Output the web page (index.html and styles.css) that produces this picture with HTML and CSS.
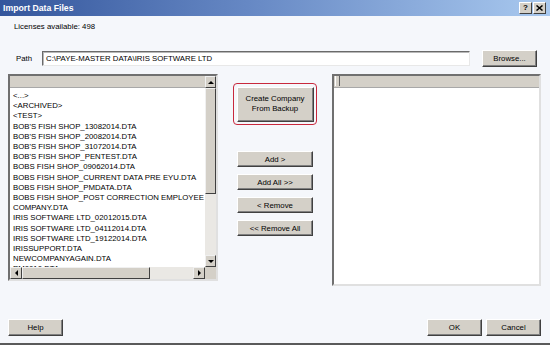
FILE: index.html
```html
<!DOCTYPE html>
<html lang="en">
<head>
    <meta charset="UTF-8">
    <title>Import Data Files</title>
    <link rel="stylesheet" href="styles.css">
</head>
<body>
    <div class="window">
        <div class="titlebar">
            <span class="title">Import Data Files</span>
            <div class="caption-btns">
                <span class="cap-btn">?</span>
                <span class="cap-btn">
                    <svg width="7" height="6" viewBox="0 0 7 6"><path d="M0.5 0.5 L6.5 5.5 M6.5 0.5 L0.5 5.5" stroke="#000" stroke-width="1.5"/></svg>
                </span>
            </div>
        </div>

        <div class="content">
            <div class="licenses">Licenses available: 498</div>

            <div class="path-row">
                <span class="path-label">Path</span>
                <div class="path-input">C:\PAYE-MASTER DATA\IRIS SOFTWARE LTD</div>
                <button class="btn browse">Browse...</button>
            </div>

            <div class="lists">
                <div class="listbox source">
                    <div class="lb-body">
                        <div class="lb-header"></div>
                        <ul class="items">
                            <li>&lt;...&gt;</li>
                            <li>&lt;ARCHIVED&gt;</li>
                            <li>&lt;TEST&gt;</li>
                            <li>BOB'S FISH SHOP_13082014.DTA</li>
                            <li>BOB'S FISH SHOP_20082014.DTA</li>
                            <li>BOB'S FISH SHOP_31072014.DTA</li>
                            <li>BOB'S FISH SHOP_PENTEST.DTA</li>
                            <li>BOBS FISH SHOP_09062014.DTA</li>
                            <li>BOBS FISH SHOP_CURRENT DATA PRE EYU.DTA</li>
                            <li>BOBS FISH SHOP_PMDATA.DTA</li>
                            <li>BOBS FISH SHOP_POST CORRECTION EMPLOYEE</li>
                            <li>COMPANY.DTA</li>
                            <li>IRIS SOFTWARE LTD_02012015.DTA</li>
                            <li>IRIS SOFTWARE LTD_04112014.DTA</li>
                            <li>IRIS SOFTWARE LTD_19122014.DTA</li>
                            <li>IRISSUPPORT.DTA</li>
                            <li>NEWCOMPANYAGAIN.DTA</li>
                            <li>PM0010.DTA</li>
                        </ul>
                    </div>
                    <div class="vscroll">
                        <span class="sb-btn"><i class="arrow up"></i></span>
                        <span class="sb-thumb v"></span>
                        <span class="sb-track"></span>
                        <span class="sb-btn"><i class="arrow down"></i></span>
                    </div>
                    <div class="hscroll">
                        <span class="sb-btn h"><i class="arrow left"></i></span>
                        <span class="sb-thumb h"></span>
                        <span class="sb-track"></span>
                        <span class="sb-btn h"><i class="arrow right"></i></span>
                    </div>
                    <div class="sb-corner"></div>
                </div>

                <div class="actions">
                    <div class="highlight">
                        <button class="btn create">Create Company<br>From Backup</button>
                    </div>
                    <div class="move-btns">
                        <button class="btn move">Add &gt;</button>
                        <button class="btn move">Add All &gt;&gt;</button>
                        <button class="btn move">&lt; Remove</button>
                        <button class="btn move">&lt;&lt; Remove All</button>
                    </div>
                </div>

                <div class="listbox target">
                    <div class="lb-header"><span class="col-sep"></span></div>
                </div>
            </div>

            <div class="footer">
                <button class="btn dlg">Help</button>
                <div class="footer-right">
                    <button class="btn dlg">OK</button>
                    <button class="btn dlg">Cancel</button>
                </div>
            </div>
        </div>
    </div>
</body>
</html>
```

FILE: styles.css
```css
body {
    margin: 0;
    font-family: "Liberation Sans", Arial, sans-serif;
    font-size: 7.8px;
    color: #000;
}
.window {
    width: 550px;
    height: 345px;
    box-sizing: border-box;
    background: #f5f7fb;
    border-bottom: 2px solid #5a5a5a;
    display: flex;
    flex-direction: column;
    overflow: hidden;
}
.titlebar {
    height: 16px;
    padding: 0 4px 0 3px;
    display: flex;
    align-items: center;
    justify-content: space-between;
    background: linear-gradient(to right, #34569c 0%, #6688c4 45%, #a9c9ef 100%);
}
.title {
    color: #fff;
    font-weight: bold;
    font-size: 8.7px;
}
.caption-btns {
    display: flex;
    gap: 1px;
}
.cap-btn {
    width: 11px;
    height: 10px;
    background: #d4d0c8;
    border: 1px solid;
    border-color: #fff #404040 #404040 #fff;
    display: flex;
    align-items: center;
    justify-content: center;
    font-weight: bold;
    font-size: 8px;
    line-height: 1;
}
.content {
    padding: 0 9px 0 8px;
    display: flex;
    flex-direction: column;
    flex: 1;
}
.licenses {
    margin-top: 6px;
    padding-left: 6px;
    line-height: 10px;
}
.path-row {
    margin-top: 18px;
    height: 17px;
    display: flex;
    align-items: center;
}
.path-label {
    width: 34px;
    padding-left: 8px;
    box-sizing: border-box;
}
.path-input {
    width: 428px;
    height: 15px;
    box-sizing: border-box;
    background: #fff;
    border: 1px solid;
    border-color: #6a6a6a #e8e8e8 #e8e8e8 #6a6a6a;
    box-shadow: inset 1px 1px #b8b8b8;
    padding-left: 3px;
    line-height: 13px;
}
.btn {
    background: #d4d0c8;
    border: 1px solid;
    border-color: #fff #404040 #404040 #fff;
    box-shadow: inset -1px -1px #808080;
    font-family: "Liberation Sans", Arial, sans-serif;
    font-size: 7.8px;
    color: #000;
    padding: 0;
    cursor: pointer;
}
.browse {
    margin-left: 12px;
    width: 55px;
    height: 17px;
}
.lists {
    margin-top: 7px;
    display: flex;
    align-items: flex-start;
}
.listbox {
    background: #fff;
    box-sizing: border-box;
    border: 2px solid;
    border-color: #707070 #e0e0e0 #e0e0e0 #707070;
}
.listbox.source {
    width: 210px;
    height: 207px;
    display: grid;
    grid-template-columns: 1fr 11px;
    grid-template-rows: 1fr 12px;
}
.lb-body {
    overflow: hidden;
    display: flex;
    flex-direction: column;
}
.lb-header {
    height: 12px;
    flex-shrink: 0;
    background: #d4d0c8;
    border-bottom: 1px solid #a8a8a8;
    box-sizing: border-box;
    display: flex;
}
.items {
    list-style: none;
    margin: 0;
    padding: 3px 0 0 3px;
    line-height: 10.2px;
    white-space: nowrap;
}
.vscroll {
    display: flex;
    flex-direction: column;
    background: #eae8e4;
}
.hscroll {
    display: flex;
    background: #eae8e4;
}
.sb-btn {
    width: 11px;
    height: 12px;
    flex-shrink: 0;
    box-sizing: border-box;
    background: #d4d0c8;
    border: 1px solid;
    border-color: #f0f0f0 #404040 #404040 #f0f0f0;
    display: flex;
    align-items: center;
    justify-content: center;
}
.sb-btn.h {
    width: 12px;
    height: 12px;
}
.sb-thumb {
    box-sizing: border-box;
    background: #d4d0c8;
    border: 1px solid;
    border-color: #f0f0f0 #404040 #404040 #f0f0f0;
}
.sb-thumb.v {
    height: 106px;
}
.sb-thumb.h {
    width: 128px;
}
.sb-track {
    flex: 1;
}
.sb-corner {
    background: #d4d0c8;
}
.arrow {
    width: 0;
    height: 0;
    border: 3px solid transparent;
}
.arrow.up {
    border-bottom-color: #000;
    border-top-width: 0;
}
.arrow.down {
    border-top-color: #000;
    border-bottom-width: 0;
}
.arrow.left {
    border-right-color: #000;
    border-left-width: 0;
}
.arrow.right {
    border-left-color: #000;
    border-right-width: 0;
}
.actions {
    width: 114px;
    display: flex;
    flex-direction: column;
    align-items: center;
    padding-top: 9px;
}
.highlight {
    width: 84px;
    height: 42px;
    box-sizing: border-box;
    border: 1.5px solid #c8283c;
    border-radius: 4px;
    display: flex;
    align-items: center;
    justify-content: center;
}
.create {
    width: 77px;
    height: 35px;
    line-height: 10px;
}
.move-btns {
    margin-top: 26px;
    display: flex;
    flex-direction: column;
    gap: 7px;
}
.move {
    width: 76px;
    height: 16px;
}
.listbox.target {
    width: 209px;
    height: 212px;
}
.col-sep {
    width: 3px;
    height: 10px;
    margin-left: 1px;
    border-right: 1px solid #606060;
    border-left: 1px solid #fff;
}
.footer {
    margin-top: 33px;
    display: flex;
    justify-content: space-between;
}
.footer-right {
    display: flex;
    gap: 4px;
}
.dlg {
    width: 55px;
    height: 17px;
}
```
